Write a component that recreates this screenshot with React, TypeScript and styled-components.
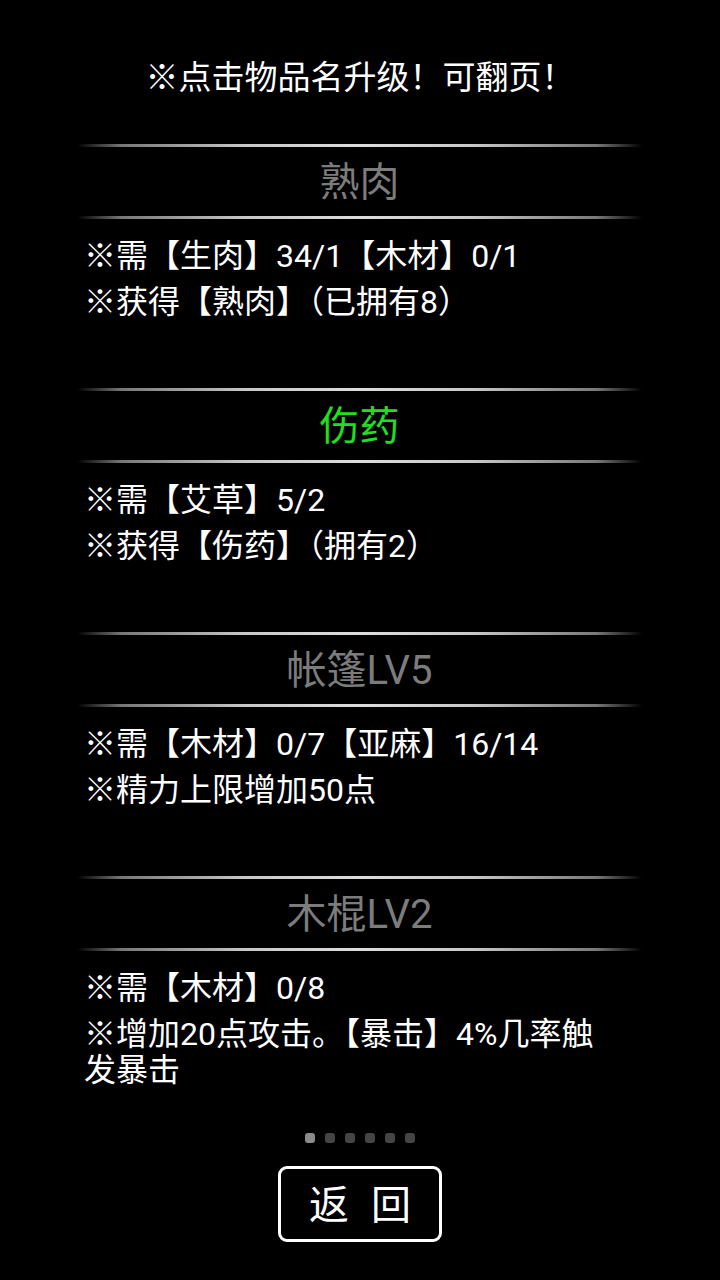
import React from "react";
import styled, { createGlobalStyle } from "styled-components";

const Global = createGlobalStyle`
  html, body { margin: 0; padding: 0; background: #000; }
  body { font-family: Roboto, "Noto Sans CJK SC", sans-serif; color: #fff; }
`;

const Page = styled.div`
  width: 720px;
  min-height: 1280px;
  background: #000;
  display: flex;
  flex-direction: column;
  align-items: center;
  padding-top: 60px;
  box-sizing: border-box;
`;

const Hint = styled.div`
  font-size: 33px;
  line-height: 36px;
  height: 36px;
  text-align: center;
  margin-bottom: 48px;
`;

const List = styled.div`
  width: 565px;
  margin-left: -1px;
  display: flex;
  flex-direction: column;
  gap: 68px;
`;

const Section = styled.div`
  display: flex;
  flex-direction: column;
`;

const Rule = styled.div`
  height: 3px;
  background: linear-gradient(
    to right,
    rgba(255, 255, 255, 0) 0%,
    rgba(200, 200, 200, 0.6) 8%,
    #c8c8c8 30%,
    #dcdcdc 50%,
    #c8c8c8 70%,
    rgba(200, 200, 200, 0.6) 92%,
    rgba(255, 255, 255, 0) 100%
  );
`;

const Title = styled.div<{ $active?: boolean }>`
  height: 69px;
  box-sizing: border-box;
  padding-bottom: 6px;
  display: flex;
  align-items: center;
  justify-content: center;
  font-size: 40px;
  color: ${(p) => (p.$active ? "#1fe01f" : "#7c7c7c")};
`;

const Body = styled.div`
  padding: 19px 28px 0 7px;
  display: flex;
  flex-direction: column;
  gap: 10px;
`;

const Line = styled.div`
  font-size: 32px;
  line-height: 36px;
  color: #fff;
`;

const Dots = styled.div`
  display: flex;
  gap: 10px;
  margin-top: 45px;
`;

const Dot = styled.div<{ $on?: boolean }>`
  width: 10px;
  height: 10px;
  border-radius: 3px;
  background: ${(p) => (p.$on ? "#8a8a8a" : "#454545")};
`;

const BackButton = styled.button`
  margin-top: 23px;
  width: 164px;
  height: 76px;
  box-sizing: border-box;
  border: 3px solid #fff;
  border-radius: 9px;
  background: #000;
  color: #fff;
  font-family: Roboto, "Noto Sans CJK SC", sans-serif;
  font-size: 40px;
  letter-spacing: 22px;
  padding: 0 0 4px 22px;
  display: flex;
  align-items: center;
  justify-content: center;
`;

const items = [
  { title: "熟肉", active: false, lines: ["※需【生肉】34/1【木材】0/1", "※获得【熟肉】（已拥有8）"] },
  { title: "伤药", active: true, lines: ["※需【艾草】5/2", "※获得【伤药】（拥有2）"] },
  { title: "帐篷LV5", active: false, lines: ["※需【木材】0/7【亚麻】16/14", "※精力上限增加50点"] },
  { title: "木棍LV2", active: false, lines: ["※需【木材】0/8", "※增加20点攻击。【暴击】4%几率触发暴击"] },
];

export default function App() {
  return (
    <>
      <Global />
      <Page>
        <Hint>※点击物品名升级！可翻页！</Hint>
        <List>
          {items.map((it) => (
            <Section key={it.title}>
              <Rule />
              <Title $active={it.active}>{it.title}</Title>
              <Rule />
              <Body>
                {it.lines.map((l) => (
                  <Line key={l}>{l}</Line>
                ))}
              </Body>
            </Section>
          ))}
        </List>
        <Dots>
          {[0, 1, 2, 3, 4, 5].map((i) => (
            <Dot key={i} $on={i === 0} />
          ))}
        </Dots>
        <BackButton>返回</BackButton>
      </Page>
    </>
  );
}
